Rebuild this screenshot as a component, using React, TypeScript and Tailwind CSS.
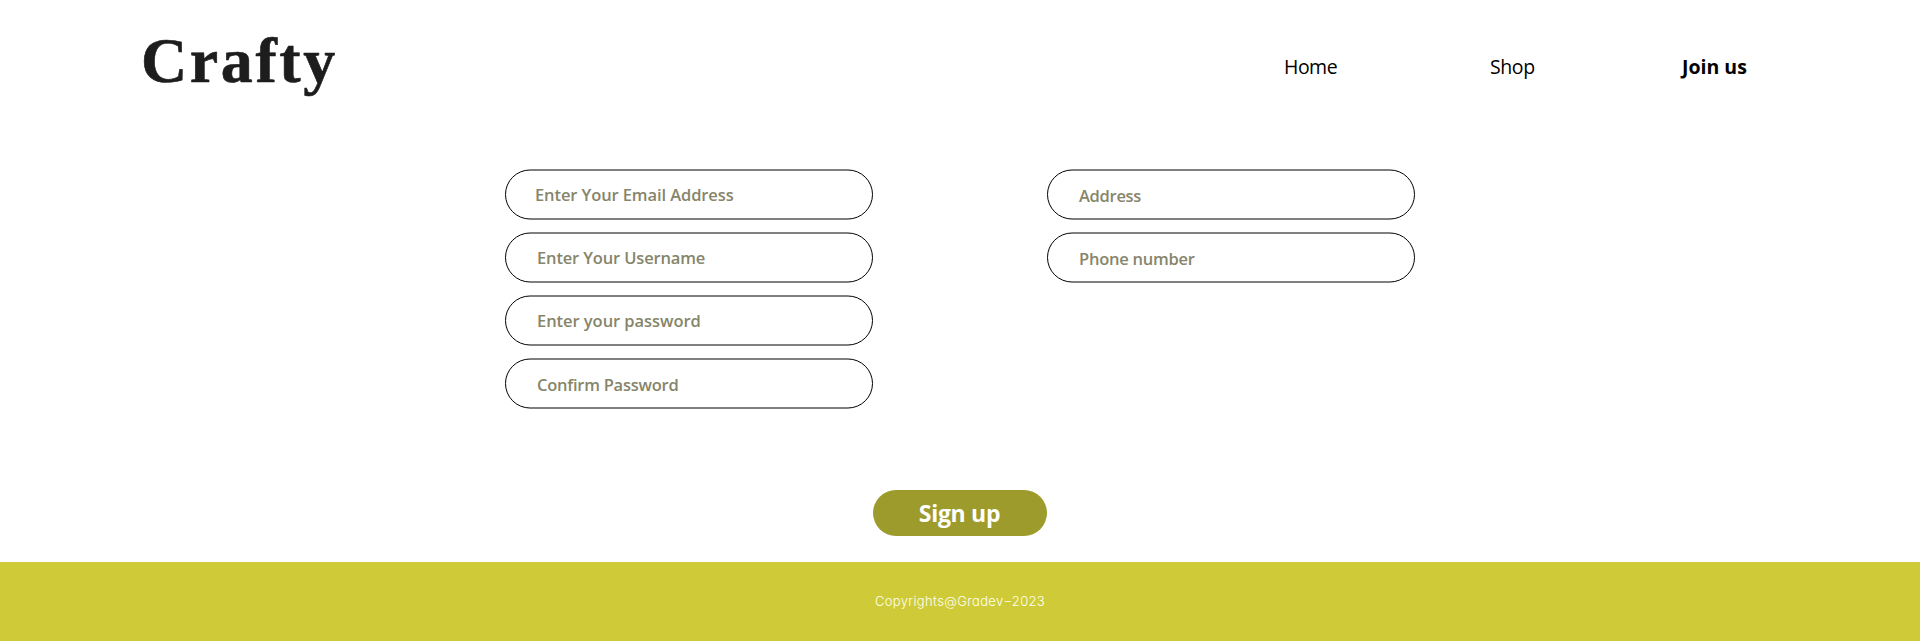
const fields = [
  [
    { label: 'Enter Your Email Address', text: 'left-[30px] top-[14px] tracking-[-0.1px]' },
    { label: 'Enter Your Username', text: 'left-[32px] top-[14px] tracking-[-0.15px]' },
    { label: 'Enter your password', text: 'left-[32px] top-[14px] tracking-[-0.05px]' },
    { label: 'Confirm Password', text: 'left-[32px] top-[15px] tracking-[-0.25px]' },
  ],
  [
    { label: 'Address', text: 'left-[32px] top-[15px] tracking-[-0.3px]' },
    { label: 'Phone number', text: 'left-[32px] top-[15px] tracking-[-0.25px]' },
  ],
];

function Field({ label, text }: { label: string; text: string }) {
  return (
    <div className="relative h-[50px] w-[368px] before:absolute before:inset-0 before:translate-y-[0.5px] before:rounded-full before:border before:border-black before:content-['']">
      <span className={`absolute whitespace-nowrap font-['Open_Sans',sans-serif] text-[16.5px] leading-6 font-semibold text-[#86856a] ${text}`}>
        {label}
      </span>
    </div>
  );
}

export default function App() {
  return (
    <div className="flex h-[641px] w-[1920px] flex-col overflow-hidden bg-white">
      <header className="flex h-[169px] shrink-0 items-start justify-between pr-[172px] pl-[141px]">
        <h1 className="mt-[23px] font-['Liberation_Serif',serif] text-[64px] leading-[76px] font-bold tracking-[2.6px] text-[#1d1d1d] [-webkit-text-stroke:0.6px_#1d1d1d]">
          Crafty
        </h1>
        <nav className="mt-[53px] flex font-['Open_Sans','Noto_Sans',sans-serif] text-[19.5px] leading-7 whitespace-nowrap text-black">
          <a className="w-[206px] tracking-[-0.5px]">Home</a>
          <a className="w-[192px] tracking-[-0.4px]">Shop</a>
          <a className="w-[66px] font-bold">Join us</a>
        </nav>
      </header>
      <main className="flex h-[393px] shrink-0 flex-col items-center">
        <div className="flex h-[321px] items-start gap-[174px]">
          {fields.map((column, i) => (
            <div key={i} className="flex flex-col gap-[13px]">
              {column.map((f) => (
                <Field key={f.label} {...f} />
              ))}
            </div>
          ))}
        </div>
        <button className="flex h-[46px] w-[174px] items-center justify-center rounded-full bg-[#9e9b2d] pr-[1px] font-['Open_Sans',sans-serif] text-[23px] leading-none font-bold tracking-[-0.3px] text-white">
          Sign up
        </button>
      </main>
      <footer className="flex h-[79px] shrink-0 justify-center bg-[#cfcb38] pt-[29px] font-['Inter',sans-serif] text-[13px] leading-5 font-light tracking-[0.35px] text-[#fffff0] [font-feature-settings:'cv11']">
        <p>
          Copyrights@Gradev<span className="mx-[1px] inline-block scale-x-150">-</span>2023
        </p>
      </footer>
    </div>
  );
}
